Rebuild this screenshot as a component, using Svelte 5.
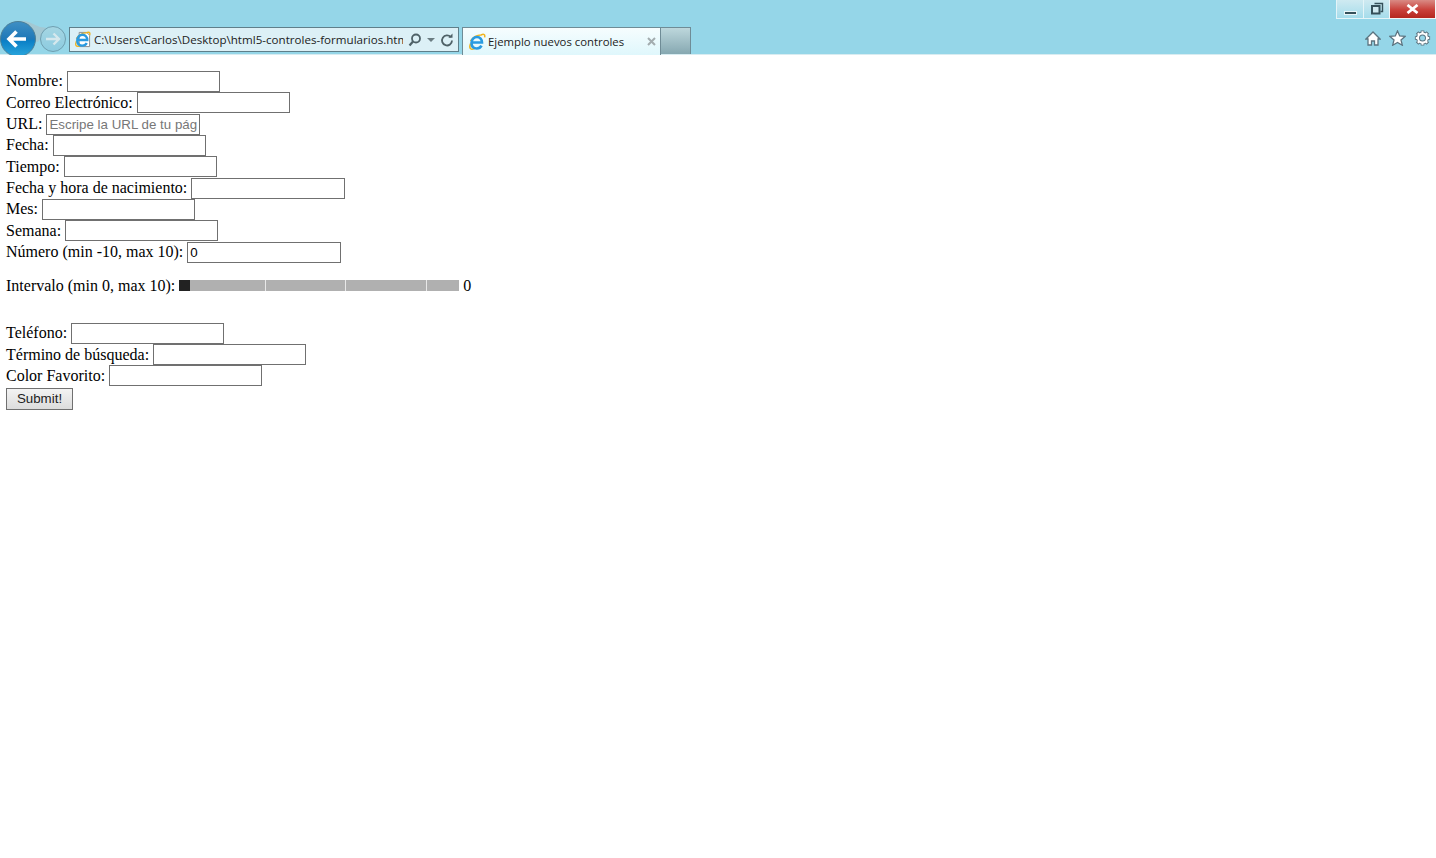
<script lang="ts">
  const firstFields = [
    { label: "Nombre:", type: "text" },
    { label: "Correo Electrónico:", type: "text" },
    { label: "URL:", type: "text", placeholder: "Escripe la URL de tu página" },
    { label: "Fecha:", type: "text" },
    { label: "Tiempo:", type: "text" },
    { label: "Fecha y hora de nacimiento:", type: "text" },
    { label: "Mes:", type: "text" },
    { label: "Semana:", type: "text" },
    { label: "Número (min -10, max 10):", type: "text", value: "0" }
  ];
  const lastFields = ["Teléfono:", "Término de búsqueda:", "Color Favorito:"];
  // track segments between the white tick marks
  const ticks = [75, 79, 80];
</script>

{#snippet ieLogo()}
  <path d="M2.500 8C5 4.500 9 2 13 2c2.800-1.500 4.400-.5 3.600 2.400" fill="none" stroke="#efb41f" stroke-width="1.500" />
  <path d="M2.600 10.500C.8 15 2 17.400 6.500 15.600" fill="none" stroke="#efb41f" stroke-width="1.500" />
  <path d="M4.500 9.500h9.500c0-3.300-2-5.500-5-5.500S3.500 6.500 3.500 10s2.200 5.500 5.300 5.500c2.200 0 3.800-1 4.700-2.800" fill="none" stroke="#2a9be0" stroke-width="2.600" />
{/snippet}

<div class="chrome">
  <div class="caption">
    <button class="win min" aria-label="Minimizar"><span class="min-bar"></span></button>
    <button class="win restore" aria-label="Restaurar">
      <svg width="14" height="14" viewBox="0 0 14 14">
        <path d="M4.500 1.500h8v8h-2" fill="none" stroke="#35505a" stroke-width="1.400" />
        <rect x="2" y="4" width="7.500" height="7.500" fill="#cfe9f0" stroke="#35505a" stroke-width="2" />
      </svg>
    </button>
    <button class="win close" aria-label="Cerrar">
      <svg width="13" height="10" viewBox="0 0 13 10">
        <path d="M1.500 1l10 8M11.500 1l-10 8" stroke="#fff" stroke-width="2.800" />
      </svg>
    </button>
  </div>

  <div class="toolbar">
    <div class="nav">
      <svg class="nav-svg" width="69" height="36" viewBox="0 0 69 36" aria-hidden="true">
        <defs>
          <linearGradient id="back" x1="0" y1="0" x2="0" y2="1">
            <stop offset="0" stop-color="#3f8fc4" />
            <stop offset="0.5" stop-color="#1f78b8" />
            <stop offset="0.55" stop-color="#0a7fc6" />
            <stop offset="1" stop-color="#2aa6dc" />
          </linearGradient>
          <linearGradient id="fwd" x1="0" y1="0" x2="0" y2="1">
            <stop offset="0" stop-color="#a5d6e3" />
            <stop offset="1" stop-color="#8ccbe0" />
          </linearGradient>
        </defs>
        <path d="M18 0c10-1 14 3 22 6l8 1-10 14-6-2z" fill="#a6c6cf" opacity="0.85" />
        <circle cx="18" cy="18" r="17.500" fill="url(#back)" stroke="#4c7f97" />
        <path d="M9 18h17M16.500 10.500 9 18l7.500 7.500" fill="none" stroke="#fff" stroke-width="3.600" />
        <circle cx="53" cy="18" r="12.500" fill="url(#fwd)" stroke="#6f9fb0" />
        <path d="M46 18h13M53.500 12.500 59 18l-5.500 5.500" fill="none" stroke="#d5e8ed" stroke-width="2.400" />
      </svg>
    </div>

    <div class="address">
      <span class="page-icon">
        <svg width="17" height="17" viewBox="0 0 18 18" aria-hidden="true">
          <path d="M5.500 1.500h8l3 3v12h-11z" fill="#fff" stroke="#8a8a8a" />
          {@render ieLogo()}
        </svg>
      </span>
      <span class="url">C:\Users\Carlos\Desktop\html5-controles-formularios.html</span>
      <span class="addr-tools">
        <svg width="14" height="14" viewBox="0 0 14 14" aria-hidden="true">
          <circle cx="8" cy="5.500" r="4" fill="none" stroke="#4f6167" stroke-width="1.800" />
          <path d="M5 8.500 1.500 12.500" stroke="#4f6167" stroke-width="2.200" />
        </svg>
        <svg class="caret" width="8" height="4" viewBox="0 0 8 4" aria-hidden="true"><path d="M0 0h8L4 4z" fill="#6b7c82" /></svg>
        <svg class="reload" width="14" height="14" viewBox="0 0 14 14" aria-hidden="true">
          <path d="M10.800 4.200a5 5 0 1 0 1.200 3.300" fill="none" stroke="#4f6167" stroke-width="1.800" />
          <path d="M8.300 4.800h4.200V.6z" fill="#4f6167" />
        </svg>
      </span>
    </div>

    <div class="tab">
      <span class="tab-icon">
        <svg width="18" height="18" viewBox="0 0 18 18" aria-hidden="true">{@render ieLogo()}</svg>
      </span>
      <span class="tab-title">Ejemplo nuevos controles</span>
      <svg class="tab-close" width="9" height="9" viewBox="0 0 9 9" aria-hidden="true">
        <path d="M1 1l7 7M8 1 1 8" stroke="#a3acaf" stroke-width="2" />
      </svg>
    </div>
    <div class="new-tab"></div>

    <div class="tools">
      <svg width="16" height="15" viewBox="0 0 16 15" aria-hidden="true">
        <path d="M8 1 1 8h2v6h3.500v-4h3v4H13V8h2z" fill="#fff" stroke="#5c7480" stroke-width="1.300" />
      </svg>
      <svg width="17" height="16" viewBox="0 0 17 16" aria-hidden="true">
        <path d="m8.500 1 2.200 5 5.300.4-4 3.500 1.300 5.300-4.800-2.800-4.800 2.800 1.300-5.300-4-3.500 5.300-.4z" fill="#fff" stroke="#5c7480" stroke-width="1.300" />
      </svg>
      <svg width="17" height="16" viewBox="0 0 16 16" aria-hidden="true">
        <path d="M8 .4v3M8 12.600v3M.4 8h3M12.600 8h3M2.600 2.600l2 2M11.400 11.400l2 2M13.400 2.600l-2 2M4.600 11.400l-2 2" stroke="#5c7480" stroke-width="3.600" />
        <circle cx="8" cy="8" r="4.500" fill="none" stroke="#5c7480" stroke-width="4" />
        <path d="M8 1.300v2M8 12.700v2M1.300 8h2M12.700 8h2M3.300 3.300l1.400 1.400M11.300 11.300l1.400 1.400M12.700 3.300l-1.400 1.400M4.700 11.300l-1.400 1.400" stroke="#fff" stroke-width="2" />
        <circle cx="8" cy="8" r="4.500" fill="none" stroke="#fff" stroke-width="2" />
      </svg>
    </div>
  </div>
</div>

<form class="page" onsubmit={(e) => e.preventDefault()}>
  {#each firstFields as field}
    <div class="row">
      <label for={field.label}>{field.label}</label>
      <input id={field.label} type={field.type} placeholder={field.placeholder} value={field.value ?? ""} />
    </div>
  {/each}

  <div class="row range-row">
    <span class="range-text">Intervalo (min 0, max 10):</span>
    <div class="range">
      <span class="thumb"></span>
      {#each ticks as w}
        <span class="tick" style="width: {w}px"></span>
      {/each}
    </div>
    <span class="range-text">0</span>
  </div>

  {#each lastFields as label}
    <div class="row">
      <label for={label}>{label}</label>
      <input id={label} type="text" />
    </div>
  {/each}

  <button class="submit" type="submit">Submit!</button>
</form>

<style>
  :global(body) {
    margin: 0;
    background: #fff;
  }

  .chrome {
    height: 55px;
    display: flex;
    flex-direction: column;
    background: #95d6e8;
    box-shadow: inset 0 -1px 0 #d8ecf1;
    overflow: hidden;
  }

  .caption {
    height: 20px;
    flex-shrink: 0;
    display: flex;
    justify-content: flex-end;
  }

  .win {
    height: 19px;
    padding: 0;
    display: flex;
    align-items: center;
    justify-content: center;
    border: 1px solid #e4f4f8;
    border-top: none;
  }

  .min,
  .restore {
    width: 27px;
    background: linear-gradient(#cfeaf1, #a5dceb);
    border-right: none;
  }

  .min-bar {
    width: 11px;
    height: 2px;
    margin-top: 7px;
    background: #35505a;
    outline: 1px solid #e9f5f8;
  }

  .restore {
    width: 26px;
  }

  .close {
    width: 47px;
    background: linear-gradient(#d98a84, #c9403a 55%, #b5271f);
    border-color: #f0f6f8;
  }

  .toolbar {
    flex: 1;
    display: flex;
    align-items: flex-start;
    font-family: "Open Sans", "Noto Sans", sans-serif;
    color: #222;
  }

  .nav {
    width: 69px;
    height: 34px;
    flex-shrink: 0;
    margin-top: 1px;
  }

  .nav-svg {
    display: block;
  }

  .address {
    box-sizing: border-box;
    width: 390px;
    height: 25px;
    margin-top: 7px;
    flex-shrink: 0;
    display: flex;
    align-items: center;
    background: #dcf0f6;
    border: 1px solid #5f7f8a;
  }

  .page-icon {
    width: 24px;
    flex-shrink: 0;
    display: flex;
    justify-content: center;
  }

  .url {
    width: 309px;
    flex-shrink: 0;
    overflow: hidden;
    white-space: nowrap;
    font-size: 11.600px;
  }

  .addr-tools {
    flex: 1;
    display: flex;
    align-items: center;
    margin-left: 5px;
  }

  .caret {
    margin-left: 5px;
  }

  .reload {
    margin-left: 5px;
  }

  .tab {
    box-sizing: border-box;
    width: 199px;
    height: 28px;
    margin: 7px 0 0 3px;
    flex-shrink: 0;
    display: flex;
    align-items: center;
    background: linear-gradient(#f6fdfe, #dff7fc);
    border: 1px solid #6f8c96;
    border-bottom: none;
    padding-left: 5px;
  }

  .tab-icon {
    display: flex;
    width: 20px;
  }

  .tab-title {
    font-size: 11.350px;
    white-space: nowrap;
    width: 159px;
  }

  .new-tab {
    box-sizing: border-box;
    width: 30px;
    height: 27px;
    margin-top: 7px;
    flex-shrink: 0;
    background: linear-gradient(#bdd7dc, #86a8b1);
    border: 1px solid #6f8c96;
    border-left: none;
    border-bottom: none;
  }

  .tools {
    margin-left: auto;
    display: flex;
    align-items: center;
    gap: 8px;
    padding: 10px 5px 0 0;
  }

  .page {
    padding: 15.800px 6px 0;
    font-family: "Liberation Serif", "Times New Roman", serif;
    font-size: 16px;
    color: #000;
  }

  .row {
    height: 21.330px;
    display: flex;
    align-items: center;
    gap: 4px;
    white-space: nowrap;
  }

  input {
    box-sizing: border-box;
    width: 153.300px;
    height: 21px;
    flex-shrink: 0;
    padding: 0 2px;
    border: 1px solid #707070;
    border-radius: 0;
    outline: none;
    background: #fff;
    color: #000;
    font-family: "Liberation Sans", Arial, sans-serif;
    font-size: 13.330px;
  }

  input::placeholder {
    color: #777;
    opacity: 1;
  }

  .range-row {
    margin: 12px 0 26.500px;
  }

  .range-text {
    margin-top: 1px;
  }

  .range {
    width: 280px;
    height: 11px;
    flex-shrink: 0;
    display: flex;
    background: #b0b0b0;
  }

  .thumb {
    flex: none;
    width: 11px;
    background: #222;
  }

  .tick {
    flex: none;
    border-right: 1px solid #e8e8e8;
  }

  .submit {
    box-sizing: border-box;
    display: block;
    width: 67px;
    height: 22px;
    margin-top: 1px;
    padding: 0;
    border: 1px solid #707070;
    border-radius: 0;
    background: linear-gradient(#f3f3f3, #dcdcdc);
    color: #222;
    font-family: "Liberation Sans", Arial, sans-serif;
    font-size: 13.330px;
  }
</style>
